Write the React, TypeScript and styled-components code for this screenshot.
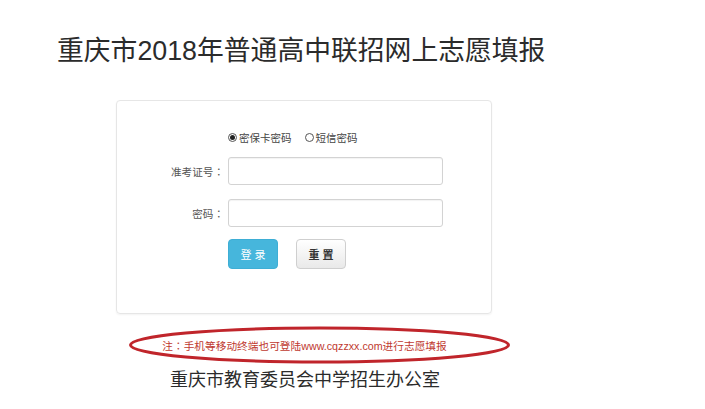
import React from "react";
import styled, { createGlobalStyle } from "styled-components";

const GlobalStyle = createGlobalStyle`
  html, body {
    margin: 0;
    padding: 0;
    background: #fff;
  }
  body {
    font-family: "Liberation Sans", "Noto Sans CJK SC", sans-serif;
    color: #333;
  }
`;

const Page = styled.div`
  width: 705px;
  height: 409px;
  overflow: hidden;
  display: flex;
  flex-direction: column;
  align-items: flex-start;
`;

const Title = styled.h1`
  margin: 34px 0 0 57px;
  font-family: "Liberation Sans", "Noto Sans CJK SC", sans-serif;
  font-weight: 400;
  font-size: 26.8px;
  line-height: 35px;
  color: #2b2b2b;
`;

const Card = styled.div`
  box-sizing: border-box;
  margin: 31px 0 0 116px;
  width: 376px;
  height: 214px;
  border: 1px solid #e6e6e6;
  border-radius: 4px;
  box-shadow: 0 1px 2px rgba(0, 0, 0, 0.05);
  padding: 29px 0 0 0;
  display: grid;
  grid-template-columns: 107px 215px;
  column-gap: 4px;
  row-gap: 14px;
  align-content: start;
  align-items: center;
`;

const Label = styled.label`
  font-family: "Noto Sans CJK SC", sans-serif;
  font-size: 10.6px;
  color: #555;
  text-align: right;
`;

const Colon = styled.span`
  font-family: "Noto Sans CJK JP", sans-serif;
`;

const RadioRow = styled.div`
  grid-column: 2;
  display: flex;
  align-items: center;
  gap: 13px;
  height: 14px;
  margin-bottom: -1px;
`;

const RadioItem = styled.span`
  display: inline-flex;
  align-items: center;
  gap: 1px;
  font-family: "Noto Sans CJK SC", sans-serif;
  font-size: 10.5px;
  color: #444;
`;

const RadioMark = styled.span<{ $checked?: boolean }>`
  box-sizing: border-box;
  width: 9px;
  height: 9px;
  border-radius: 50%;
  border: 1px solid #555;
  display: inline-flex;
  align-items: center;
  justify-content: center;
  margin-right: 1px;
  &::after {
    content: "";
    width: 5px;
    height: 5px;
    border-radius: 50%;
    background: ${(p) => (p.$checked ? "#222" : "transparent")};
  }
`;

const Input = styled.input`
  box-sizing: border-box;
  width: 215px;
  height: 28px;
  border: 1px solid #d3d3d3;
  border-radius: 3px;
  box-shadow: inset 0 1px 1px rgba(0, 0, 0, 0.05);
  outline: none;
`;

const Buttons = styled.div`
  grid-column: 2;
  display: flex;
  gap: 18px;
  margin-top: -2px;
`;

const Button = styled.button<{ $primary?: boolean }>`
  box-sizing: border-box;
  width: 50px;
  height: 30px;
  border-radius: 4px;
  font-family: "Noto Sans CJK SC", sans-serif;
  font-size: 11px;
  font-weight: ${(p) => (p.$primary ? 400 : 700)};
  letter-spacing: 3px;
  padding: 0 0 0 3px;
  cursor: pointer;
  border: 1px solid ${(p) => (p.$primary ? "#3eaed5" : "#cfcfcf")};
  color: ${(p) => (p.$primary ? "#fff" : "#333")};
  background: ${(p) =>
    p.$primary ? "#46b6dc" : "linear-gradient(#ffffff, #e9e9e9)"};
`;

const NoteBox = styled.div`
  position: relative;
  margin: 11px 0 0 128px;
  width: 383px;
  height: 40px;
  display: flex;
  align-items: center;
  justify-content: center;
`;

const Ellipse = styled.svg`
  position: absolute;
  inset: 0;
  width: 100%;
  height: 100%;
`;

const NoteText = styled.span`
  position: relative;
  margin-left: -30px;
  font-family: "Liberation Sans", "Noto Sans CJK SC", sans-serif;
  font-size: 10.7px;
  color: #c0392f;
`;

const Footer = styled.div`
  margin: 1px 0 0 170px;
  font-family: "Noto Sans CJK SC", sans-serif;
  font-size: 18px;
  line-height: 24px;
  color: #2b2b2b;
`;

export default function App() {
  return (
    <>
      <GlobalStyle />
      <Page>
        <Title>重庆市2018年普通高中联招网上志愿填报</Title>
        <Card>
          <RadioRow>
            <RadioItem>
              <RadioMark $checked />
              密保卡密码
            </RadioItem>
            <RadioItem>
              <RadioMark />
              短信密码
            </RadioItem>
          </RadioRow>
          <Label>
            准考证号<Colon>：</Colon>
          </Label>
          <Input type="text" />
          <Label>
            密码<Colon>：</Colon>
          </Label>
          <Input type="password" />
          <Buttons>
            <Button $primary>登录</Button>
            <Button>重置</Button>
          </Buttons>
        </Card>
        <NoteBox>
          <Ellipse viewBox="0 0 383 40" preserveAspectRatio="none">
            <ellipse
              cx="191.5"
              cy="20"
              rx="189"
              ry="17"
              fill="none"
              stroke="#c0252b"
              strokeWidth="3"
            />
          </Ellipse>
          <NoteText>
            注<Colon>：</Colon>手机等移动终端也可登陆www.cqzzxx.com进行志愿填报
          </NoteText>
        </NoteBox>
        <Footer>重庆市教育委员会中学招生办公室</Footer>
      </Page>
    </>
  );
}
